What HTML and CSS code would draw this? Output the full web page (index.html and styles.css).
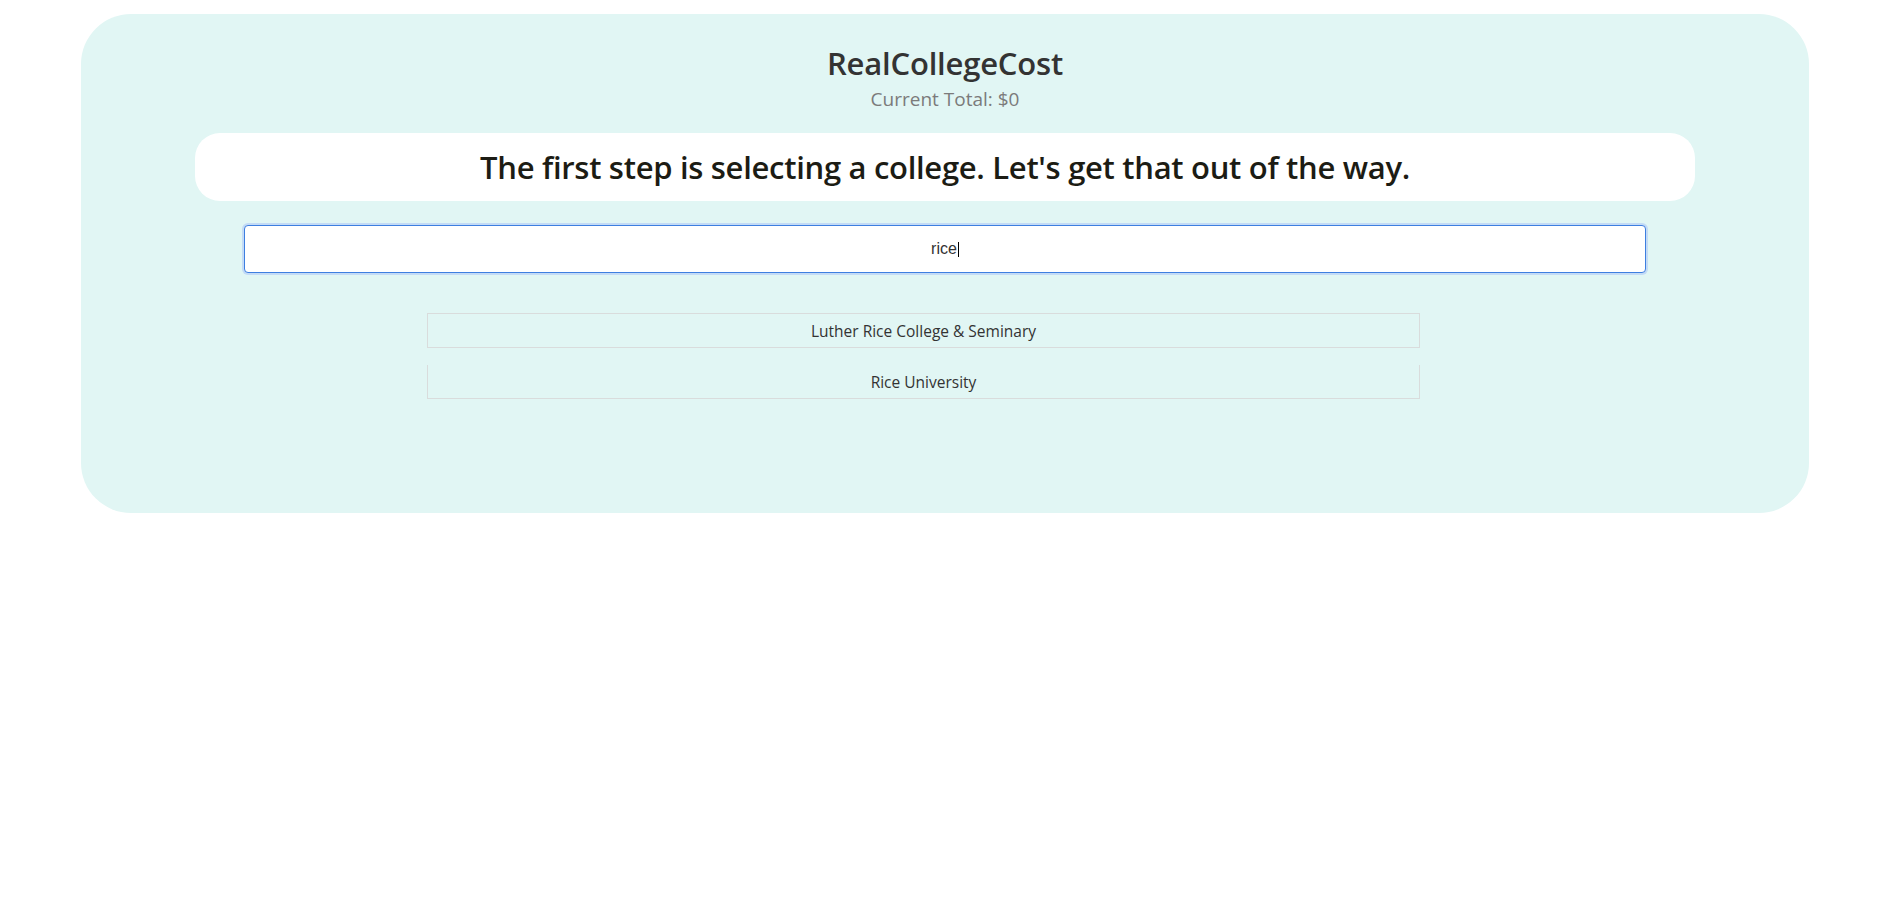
FILE: index.html
```html
<!DOCTYPE html>
<html>
<head>
<meta charset="utf-8">
<title>RealCollegeCost</title>
<link rel="stylesheet" href="styles.css">
</head>
<body>
<main class="card">
  <header class="header">
    <h1 class="title">RealCollegeCost</h1>
    <p class="total">Current Total: $0</p>
  </header>
  <div class="prompt">
    <h2 class="prompt-text">The first step is selecting a college. Let's get that out of the way.</h2>
  </div>
  <div class="search">
    <div class="search-input"><span class="typed">rice</span><span class="caret"></span></div>
  </div>
  <ul class="results">
    <li class="result first">Luther Rice College &amp; Seminary</li>
    <li class="result">Rice University</li>
  </ul>
</main>
</body>
</html>
```
FILE: styles.css
```css
html, body {
  margin: 0;
  padding: 0;
  background: #ffffff;
}

body {
  font-family: "Open Sans", "Noto Sans", sans-serif;
  padding-top: 14px;
}

.card {
  margin: 0 75px 0 81px;
  height: 499px;
  box-sizing: border-box;
  background: #e1f6f4;
  border-radius: 50px;
  padding-top: 30px;
}

.header {
  text-align: center;
}

.title {
  margin: 0;
  font-size: 31px;
  font-weight: 600;
  line-height: 38px;
  color: #333333;
  letter-spacing: -0.2px;
}

.total {
  margin: 5px 0 0;
  font-size: 19px;
  line-height: 24px;
  color: #7b7b7b;
}

.prompt {
  margin: 22px 114px 0 114px;
  height: 68px;
  background: #ffffff;
  border-radius: 25px;
  display: flex;
  align-items: center;
  justify-content: center;
}

.prompt-text {
  margin: 0;
  font-size: 31px;
  font-weight: 600;
  color: #1c1c14;
  letter-spacing: -0.3px;
}

.search {
  margin: 24px 163px 0 163px;
}

.search-input {
  height: 48px;
  box-sizing: border-box;
  background: #ffffff;
  border: 1px solid #3d7fe0;
  border-radius: 4px;
  box-shadow: 0 0 0 2px #c3dbf6;
  display: flex;
  align-items: center;
  justify-content: center;
  font-family: "Liberation Sans", Arial, sans-serif;
  font-size: 16px;
  color: #333333;
}

.caret {
  display: inline-block;
  width: 1px;
  height: 15px;
  background: #000000;
  margin-left: 1px;
}

.results {
  list-style: none;
  margin: 40px 0 0 346px;
  padding: 0;
  width: 993px;
  display: flex;
  flex-direction: column;
  gap: 17px;
}

.result {
  height: 34px;
  box-sizing: border-box;
  border: 1px solid #d9dcdc;
  border-top: none;
  display: flex;
  align-items: center;
  justify-content: center;
  font-size: 15.5px;
  color: #333333;
}

.result.first {
  height: 35px;
  border-top: 1px solid #d9dcdc;
}
```
